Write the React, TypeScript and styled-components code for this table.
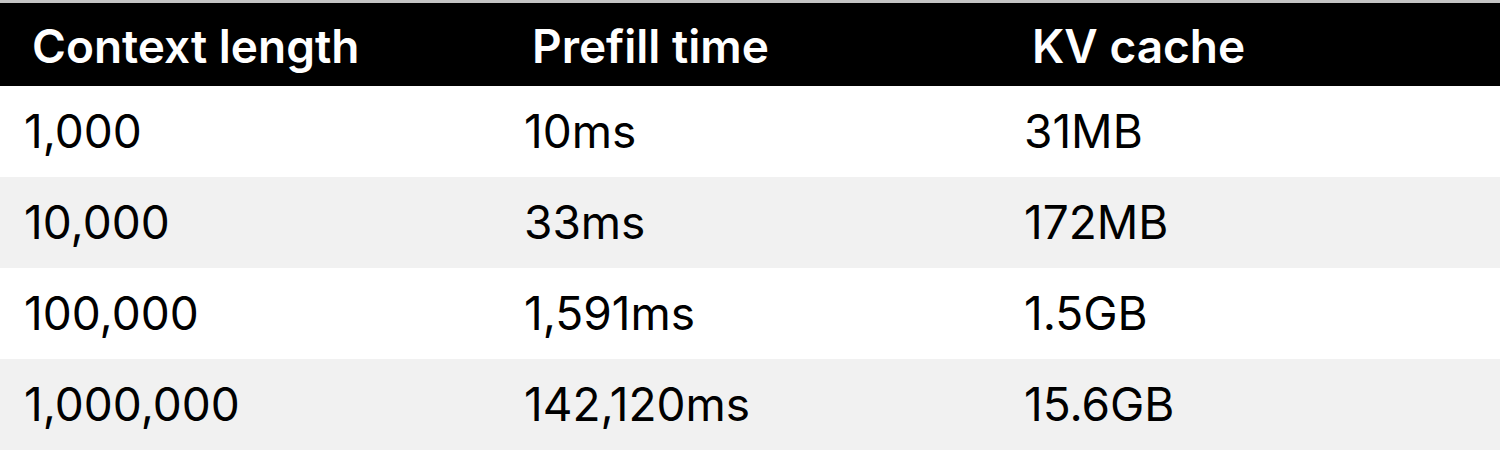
import React from 'react';
import styled, { createGlobalStyle } from 'styled-components';

const rows = [
  ['1,000', '10ms', '31MB'],
  ['10,000', '33ms', '172MB'],
  ['100,000', '1,591ms', '1.5GB'],
  ['1,000,000', '142,120ms', '15.6GB'],
];

const GlobalStyle = createGlobalStyle`
  body {
    margin: 0;
    background: #fff;
    font-family: Inter, 'Noto Sans', sans-serif;
    color: #000;
  }
`;

const App = () => {
  return (
    <>
      <GlobalStyle />
      <Table>
        <thead>
          <tr>
            <HeadCell>Context length</HeadCell>
            <HeadCell>Prefill time</HeadCell>
            <HeadCell>KV cache</HeadCell>
          </tr>
        </thead>
        <tbody>
          {rows.map((row, i) => (
            <Row key={i} $striped={i % 2 === 1}>
              {row.map((cell, j) => (
                <Cell key={j}>{cell}</Cell>
              ))}
            </Row>
          ))}
        </tbody>
      </Table>
    </>
  );
};

const Table = styled.table`
  width: 1500px;
  border-collapse: collapse;
  table-layout: fixed;
  border-top: 3px solid #c4c4c4;
`;
const HeadCell = styled.th`
  width: 500px;
  height: 84px;
  padding: 4px 0 0 32px;
  background: #000;
  color: #fff;
  text-align: left;
  font-size: 46px;
  font-weight: 600;
  line-height: 1;
  box-sizing: border-box;
`;
const Row = styled.tr<{ $striped: boolean }>`
  background: ${({ $striped }) => ($striped ? '#f1f1f1' : '#fff')};
`;
const Cell = styled.td`
  height: 91px;
  padding: 0 0 0 24px;
  font-size: 46px;
  font-weight: 400;
  line-height: 1;
  box-sizing: border-box;
`;

export default App;
